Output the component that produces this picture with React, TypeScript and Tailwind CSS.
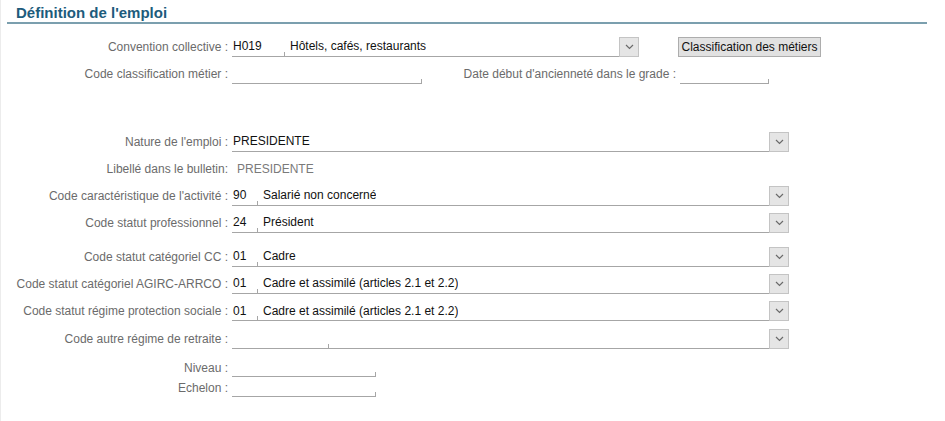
import React from 'react';

function Chevron() {
  return (
    <svg width="9" height="6" viewBox="0 0 9 6" fill="none">
      <path d="M1 1 L4.5 4.5 L8 1" stroke="#6a6a6a" strokeWidth="1.2" />
    </svg>
  );
}

function DropButton() {
  return (
    <div className="w-[20px] h-[20px] shrink-0 flex items-center justify-center bg-[#e5e5e5] border border-[#c4c4c4]">
      <Chevron />
    </div>
  );
}

function Tick() {
  return <div className="self-end w-px h-[4px] bg-[#a6a6a6] shrink-0" />;
}

interface ComboProps {
  code?: string;
  codeWidth?: number;
  text?: string;
  width: string;
  hasCode?: boolean;
}

function Combo({ code, text, width, hasCode = true, codeWidth = 25 }: ComboProps) {
  return (
    <div className="flex items-end">
      <div className={`${width} h-[20px] border-b border-[#a6a6a6] flex items-center text-[#111]`}>
        {hasCode ? (
          <>
            <div className="h-full flex items-center pl-[1px] shrink-0" style={{ width: codeWidth }}>
              {code}
            </div>
            <Tick />
            <div className="pl-[5px] truncate">{text}</div>
          </>
        ) : (
          <div className="pl-[1px]">{text}</div>
        )}
      </div>
      <DropButton />
    </div>
  );
}

function Label({ children, w = 'w-[231px]' }: { children: React.ReactNode; w?: string }) {
  return <div className={`${w} shrink-0 text-right text-[#6b6b6b] pr-[4px] whitespace-nowrap`}>{children}</div>;
}

function LineField({ width, h = 'h-[20px]' }: { width: string; h?: string }) {
  return (
    <div className={`${width} ${h} border-b border-[#a6a6a6] flex justify-end`}>
      <Tick />
    </div>
  );
}

export default function App() {
  return (
    <div
      className="w-[945px] h-[421px] bg-white text-[12px] leading-[14px] overflow-hidden border-l border-[#ececec]"
      style={{ fontFamily: '"Liberation Sans", Arial, sans-serif' }}
    >
      <div className="pt-[4px] pl-[6px] w-[926px]">
        <div className="border-b-2 border-[#7b9fae] pl-[9px] text-[15px] leading-[18px] font-bold text-[#1d5c7c]">
          Définition de l'emploi
        </div>
      </div>

      <div className="mt-[9px]">
        <div className="flex items-center h-[27px]">
          <Label>Convention collective :</Label>
          <Combo code="H019" codeWidth={52} text="Hôtels, cafés, restaurants" width="w-[387px]" />
          <button className="ml-[39px] w-[143px] h-[20px] bg-[#e1e1e1] border border-[#adadad] text-[#111] text-[12px] leading-[14px]">
            Classification des métiers
          </button>
        </div>
        <div className="flex items-center h-[28px]">
          <Label>Code classification métier :</Label>
          <LineField width="w-[190px]" />
          <Label w="w-[258px]">Date début d'ancienneté dans le grade :</Label>
          <LineField width="w-[89px]" />
        </div>

        <div className="h-[40px]" />

        <div className="flex items-center h-[27px]">
          <Label>Nature de l'emploi :</Label>
          <Combo hasCode={false} text="PRESIDENTE" width="w-[537px]" />
        </div>
        <div className="flex items-center h-[27px]">
          <Label>Libellé dans le bulletin:</Label>
          <div className="pl-[5px] text-[#7a7a7a]">PRESIDENTE</div>
        </div>
        <div className="flex items-center h-[27px]">
          <Label>Code caractéristique de l'activité :</Label>
          <Combo code="90" text="Salarié non concerné" width="w-[537px]" />
        </div>
        <div className="flex items-center h-[27px]">
          <Label>Code statut professionnel :</Label>
          <Combo code="24" text="Président" width="w-[537px]" />
        </div>

        <div className="h-[7px]" />

        <div className="flex items-center h-[27px]">
          <Label>Code statut catégoriel CC :</Label>
          <Combo code="01" text="Cadre" width="w-[537px]" />
        </div>
        <div className="flex items-center h-[27px]">
          <Label>Code statut catégoriel AGIRC-ARRCO :</Label>
          <Combo code="01" text="Cadre et assimilé (articles 2.1 et 2.2)" width="w-[537px]" />
        </div>
        <div className="flex items-center h-[28px]">
          <Label>Code statut régime protection sociale :</Label>
          <Combo code="01" text="Cadre et assimilé (articles 2.1 et 2.2)" width="w-[537px]" />
        </div>
        <div className="flex items-center h-[27px]">
          <Label>Code autre régime de retraite :</Label>
          <Combo code="" codeWidth={96} text="" width="w-[537px]" />
        </div>

        <div className="h-[6px]" />

        <div className="flex items-center h-[20px]">
          <Label>Niveau :</Label>
          <LineField width="w-[144px]" h="h-[17px]" />
        </div>
        <div className="flex items-center h-[20px]">
          <Label>Echelon :</Label>
          <LineField width="w-[144px]" h="h-[17px]" />
        </div>
      </div>
    </div>
  );
}
